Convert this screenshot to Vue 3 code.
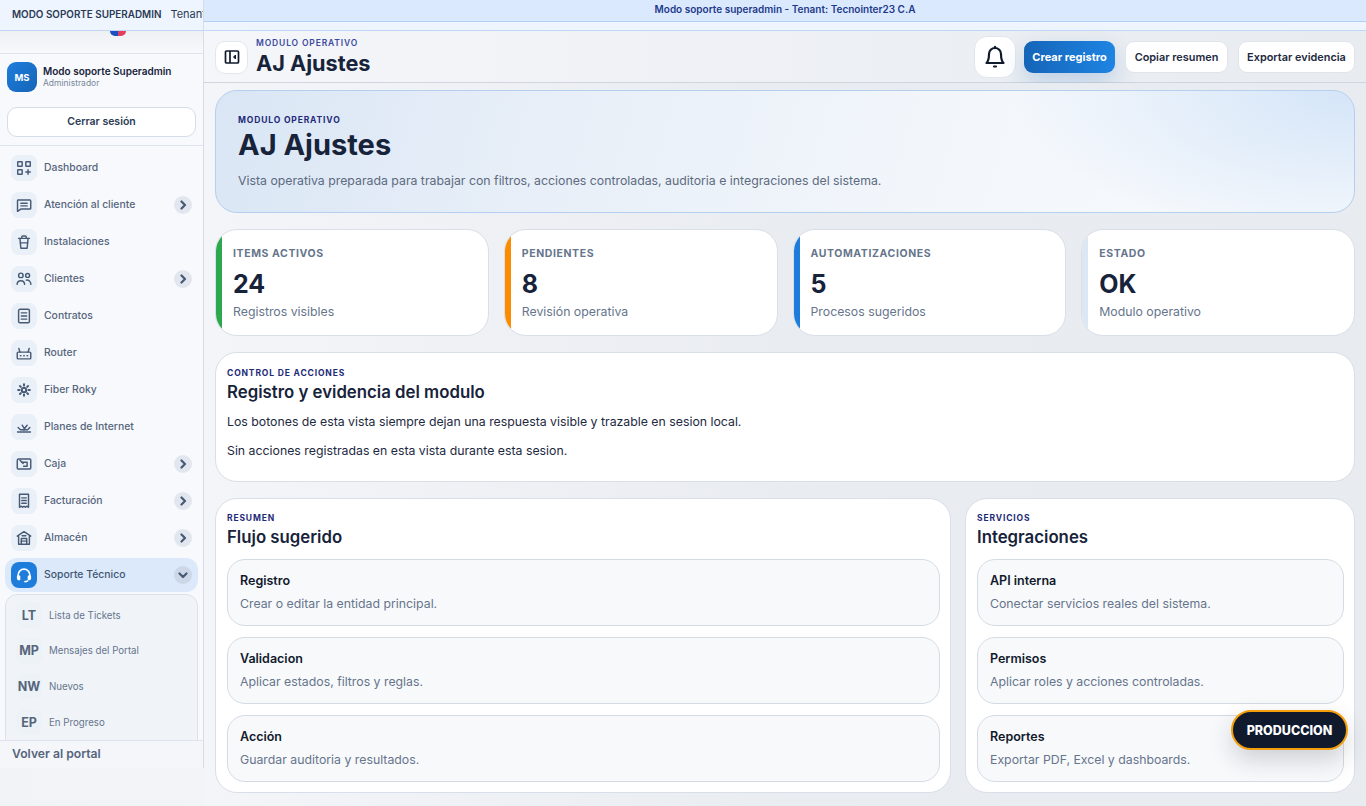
<script setup>
const navItems = [
  { label: 'Dashboard', icon: ['M3.500 3h4a.5.5 0 0 1 .5.5v4a.5.5 0 0 1-.5.5h-4a.5.5 0 0 1-.5-.5v-4a.5.5 0 0 1 .5-.5z', 'M12.500 3h4a.5.5 0 0 1 .5.5v4a.5.5 0 0 1-.5.5h-4a.5.5 0 0 1-.5-.5v-4a.5.5 0 0 1 .5-.5z', 'M3.500 12h4a.5.5 0 0 1 .5.5v4a.5.5 0 0 1-.5.5h-4a.5.5 0 0 1-.5-.5v-4a.5.5 0 0 1 .5-.5z', 'M14.500 12v5M12 14.500h5'] },
  { label: 'Atención al cliente', arrow: true, icon: ['M3.500 4.500h13a1 1 0 0 1 1 1v8a1 1 0 0 1-1 1H6.500L2.800 17V5.200a.7.7 0 0 1 .7-.7z', 'M6.500 8h7M6.500 11h7'] },
  { label: 'Instalaciones', icon: ['M4 6h12', 'M7.500 6V4.300a1 1 0 0 1 1-1h3a1 1 0 0 1 1 1V6', 'M5.500 6l1 11h7l1-11', 'M6 11h8'] },
  { label: 'Clientes', arrow: true, icon: ['M6.500 8.500a2.500 2.500 0 1 0 0-5 2.500 2.500 0 0 0 0 5z', 'M14 8.200a2.200 2.200 0 1 0 0-4.400 2.200 2.200 0 0 0 0 4.400z', 'M2.300 16c.4-5.500 8-5.500 8.400 0', 'M12.500 11.300c2.800-.6 5 1.400 5.200 4.700'] },
  { label: 'Contratos', icon: ['M5.500 2.500h9a1.500 1.500 0 0 1 1.500 1.500v12a1.500 1.500 0 0 1-1.500 1.500h-9A1.500 1.500 0 0 1 4 16V4a1.500 1.500 0 0 1 1.500-1.500z', 'M7 6.500h6M7 10h6M7 13.500h6'] },
  { label: 'Router', icon: ['M3.500 9h13a1 1 0 0 1 1 1v5.500a1 1 0 0 1-1 1h-13a1 1 0 0 1-1-1V10a1 1 0 0 1 1-1z', 'M5.500 9 4.300 5M14.500 9l1.200-4', 'M6 13h.6M9.700 13h.6M13.400 13h.6'] },
  { label: 'Fiber Roky', bold: true, icon: ['M10 7.500a2.500 2.500 0 1 0 0 5 2.500 2.500 0 0 0 0-5z', 'M10 3.500v1.500M10 15v1.500M3.500 10H5M15 10h1.500M5.500 5.500l1 1M13.500 13.500l1 1M14.500 5.500l-1 1M6.500 13.500l-1 1'] },
  { label: 'Planes de Internet', icon: ['M2.800 15.500h14.400', 'M3.500 10.500 6 13h8l2.500-2.500', 'M8 8l3 5M13.500 8 9.500 13'] },
  { label: 'Caja', arrow: true, icon: ['M4 4.500h12.500a1 1 0 0 1 1 1v9a1 1 0 0 1-1 1H3.500a1 1 0 0 1-1-1V6a1.500 1.500 0 0 1 1.500-1.500z', 'M7.500 8h6v4.500h-4', 'M5.500 5.800 9 9.300'] },
  { label: 'Facturación', arrow: true, icon: ['M5 2.500h10V17l-2-1.200-1.500 1.200-1.500-1.200L8.500 17 7 15.800 5 17z', 'M7.500 6.500h5M7.500 9.500h5M7.500 12.500h5'] },
  { label: 'Almacén', arrow: true, icon: ['M2.500 8 10 3l7.500 5', 'M4 8v9h12V8', 'M7 17v-6.500h6V17', 'M7 13.500h6M8 7.500h4'] },
]

const subItems = [
  { code: 'LT', label: 'Lista de Tickets' },
  { code: 'MP', label: 'Mensajes del Portal' },
  { code: 'NW', label: 'Nuevos' },
  { code: 'EP', label: 'En Progreso' },
]

const stats = [
  { title: 'ITEMS ACTIVOS', value: '24', note: 'Registros visibles', color: '#2ea84f' },
  { title: 'PENDIENTES', value: '8', note: 'Revisión operativa', color: '#fb8c00' },
  { title: 'AUTOMATIZACIONES', value: '5', note: 'Procesos sugeridos', color: '#1e7ddb' },
  { title: 'ESTADO', value: 'OK', note: 'Modulo operativo', color: '#dbe7f3' },
]

const flujo = [
  { title: 'Registro', text: 'Crear o editar la entidad principal.' },
  { title: 'Validacion', text: 'Aplicar estados, filtros y reglas.' },
  { title: 'Acción', text: 'Guardar auditoria y resultados.' },
]

const integraciones = [
  { title: 'API interna', text: 'Conectar servicios reales del sistema.' },
  { title: 'Permisos', text: 'Aplicar roles y acciones controladas.' },
  { title: 'Reportes', text: 'Exportar PDF, Excel y dashboards.' },
]
</script>

<template>
  <div class="app">
    <aside class="side">
      <div class="side-strip">
        <strong>MODO SOPORTE SUPERADMIN</strong>
        <span>Tenant: Tecnointer23 C.A</span>
      </div>
      <div class="side-logo">
        <span class="logo-mark"></span>
      </div>
      <div class="profile">
        <div class="avatar">MS</div>
        <div class="profile-text">
          <div class="profile-name">Modo soporte Superadmin</div>
          <div class="profile-role">Administrador</div>
        </div>
      </div>
      <div class="logout-wrap">
        <button type="button" class="logout">Cerrar sesión</button>
      </div>
      <nav class="nav">
        <a v-for="item in navItems" :key="item.label" class="nav-row">
          <span class="nav-icon">
            <svg width="20" height="20" viewBox="0 0 20 20" fill="none" stroke="#475a75" :stroke-width="item.bold ? 2.2 : 1.6" stroke-linecap="round" stroke-linejoin="round" aria-hidden="true">
              <path v-for="d in item.icon" :key="d" :d="d" />
            </svg>
          </span>
          <span class="nav-label">{{ item.label }}</span>
          <span v-if="item.arrow" class="nav-arrow">
            <svg width="10" height="10" viewBox="0 0 10 10" fill="none" stroke="#475a75" stroke-width="2.200" stroke-linecap="round" stroke-linejoin="round" aria-hidden="true">
              <path d="M3.500 1.500 7 5 3.500 8.500" />
            </svg>
          </span>
        </a>
        <a class="nav-row nav-row--active">
          <span class="nav-icon nav-icon--active">
            <svg width="20" height="20" viewBox="0 0 20 20" fill="none" stroke="#fff" stroke-width="1.800" stroke-linecap="round" stroke-linejoin="round" aria-hidden="true">
              <path d="M3.500 12V10a6.500 6.500 0 0 1 13 0v2" />
              <path d="M3 11.500h2v3.500H3.800A1.500 1.500 0 0 1 3 13.500zM17 11.500h-2v3.500h1.200a1.500 1.500 0 0 0 .8-1.500z" fill="#fff" />
              <path d="M14 16.500c-1 .6-2 .8-3 .8" />
            </svg>
          </span>
          <span class="nav-label">Soporte Técnico</span>
          <span class="nav-arrow nav-arrow--open">
            <svg width="10" height="10" viewBox="0 0 10 10" fill="none" stroke="#475a75" stroke-width="2.200" stroke-linecap="round" stroke-linejoin="round" aria-hidden="true">
              <path d="M1.500 3.500 5 7 8.500 3.500" />
            </svg>
          </span>
        </a>
        <div class="sub">
          <a v-for="s in subItems" :key="s.code" class="sub-row">
            <span class="sub-code">{{ s.code }}</span>
            <span class="sub-label">{{ s.label }}</span>
          </a>
        </div>
      </nav>
      <div class="side-foot">Volver al portal</div>
    </aside>

    <div class="main">
      <div class="banner">Modo soporte superadmin - Tenant: Tecnointer23 C.A</div>
      <div class="banner-gap"></div>

      <header class="topbar">
        <button type="button" class="square-btn" aria-label="Menu">
          <svg width="16" height="16" viewBox="0 0 16 16" fill="none" stroke="#111a2c" stroke-width="1.700" aria-hidden="true">
            <rect x="1.500" y="2" width="13" height="12" rx="1" />
            <path d="M6 2v12" />
            <path d="M11.500 6 9.500 8l2 2z" fill="#111a2c" stroke-width="1" />
          </svg>
        </button>
        <div class="topbar-title">
          <div class="eyebrow eyebrow--top">MODULO OPERATIVO</div>
          <div class="topbar-name">AJ Ajustes</div>
        </div>
        <div class="topbar-actions">
          <button type="button" class="bell-btn" aria-label="Notificaciones">
            <svg width="22" height="24" viewBox="0 0 22 24" fill="none" stroke="#111a2c" stroke-width="2.200" stroke-linecap="round" stroke-linejoin="round" aria-hidden="true">
              <path d="M11 3a6 6 0 0 0-6 6c0 5-1 7.500-2.500 9h17C18 16.500 17 14 17 9a6 6 0 0 0-6-6z" />
              <path d="M11 1.800V3" />
              <path d="M10 21.500h2" />
            </svg>
          </button>
          <button type="button" class="btn btn--primary">Crear registro</button>
          <button type="button" class="btn btn--copy">Copiar resumen</button>
          <button type="button" class="btn btn--export">Exportar evidencia</button>
        </div>
      </header>

      <main class="content">
        <section class="hero">
          <div class="eyebrow">MODULO OPERATIVO</div>
          <h1>AJ Ajustes</h1>
          <p>Vista operativa preparada para trabajar con filtros, acciones controladas, auditoria e integraciones del sistema.</p>
        </section>

        <section class="stats">
          <div v-for="s in stats" :key="s.title" class="stat" :style="{ '--accent': s.color }">
            <div class="stat-title">{{ s.title }}</div>
            <div class="stat-value">{{ s.value }}</div>
            <div class="stat-note">{{ s.note }}</div>
          </div>
        </section>

        <section class="panel panel--control">
          <div class="eyebrow">CONTROL DE ACCIONES</div>
          <h2>Registro y evidencia del modulo</h2>
          <p class="panel-line">Los botones de esta vista siempre dejan una respuesta visible y trazable en sesion local.</p>
          <p class="panel-line">Sin acciones registradas en esta vista durante esta sesion.</p>
        </section>

        <section class="columns">
          <div class="panel panel--col">
            <div class="eyebrow">RESUMEN</div>
            <h2>Flujo sugerido</h2>
            <div class="cards">
              <div v-for="c in flujo" :key="c.title" class="mini">
                <div class="mini-title">{{ c.title }}</div>
                <div class="mini-text">{{ c.text }}</div>
              </div>
            </div>
          </div>
          <div class="panel panel--col">
            <div class="eyebrow">SERVICIOS</div>
            <h2>Integraciones</h2>
            <div class="cards">
              <div v-for="c in integraciones" :key="c.title" class="mini">
                <div class="mini-title">{{ c.title }}</div>
                <div class="mini-text">{{ c.text }}</div>
              </div>
            </div>
          </div>
        </section>
      </main>
    </div>

    <div class="env-badge">PRODUCCION</div>
  </div>
</template>

<style scoped>
.app {
  position: relative;
  display: flex;
  width: 1366px;
  height: 806px;
  overflow: hidden;
  background: linear-gradient(90deg, #f1f3f7, #f4f6fa);
  font-family: Inter, "Liberation Sans", sans-serif;
  color: #111a2c;
}

/* sidebar */
.side {
  width: 204px;
  height: 768px;
  flex-shrink: 0;
  display: flex;
  flex-direction: column;
  background: #f7f9fc;
  border-right: 1px solid #d5dde8;
  box-sizing: border-box;
}
.side-strip {
  height: 31px;
  flex-shrink: 0;
  box-sizing: border-box;
  display: flex;
  align-items: center;
  gap: 9px;
  padding-left: 12px;
  padding-bottom: 2px;
  background: #eef5ff;
  border-bottom: 1px solid #bfd7f7;
  white-space: nowrap;
  overflow: hidden;
  font-size: 11px;
  color: #2b3a55;
}
.side-strip strong {
  font-weight: 600;
  font-size: 9.900px;
}
.side-logo {
  height: 23px;
  flex-shrink: 0;
  box-sizing: border-box;
  border-bottom: 1px solid #dde4ee;
  background: linear-gradient(#eef0f4, #f7f9fc);
  display: flex;
  justify-content: center;
  overflow: hidden;
}
.logo-mark {
  display: block;
  width: 16px;
  height: 5px;
  margin-left: 32px;
  border-radius: 0 0 8px 8px;
  background: linear-gradient(90deg, #1d4fc4 50%, #e2405a 50%);
}
.profile {
  display: flex;
  align-items: center;
  gap: 6px;
  padding: 8px 7px 0;
  flex-shrink: 0;
}
.avatar {
  width: 30px;
  height: 30px;
  border-radius: 9px;
  background: linear-gradient(135deg, #1e7ddb, #1565b8);
  color: #fff;
  font-size: 9.500px;
  font-weight: 700;
  display: flex;
  align-items: center;
  justify-content: center;
}
.profile-name {
  font-size: 10px;
  font-weight: 600;
  color: #17233a;
  line-height: 13px;
  white-space: nowrap;
}
.profile-role {
  font-size: 8.500px;
  color: #7a879b;
  line-height: 11px;
}
.logout-wrap {
  padding: 15px 7px 8px;
  border-bottom: 1px solid #dde4ee;
  flex-shrink: 0;
}
.logout {
  display: block;
  width: 100%;
  height: 30px;
  background: #fff;
  border: 1px solid #d5dde8;
  border-radius: 10px;
  color: #2b3a55;
  font-family: inherit;
  font-size: 10.500px;
  font-weight: 600;
  padding-bottom: 2px;
}
.nav {
  flex: 1;
  min-height: 0;
  overflow: hidden;
  padding-top: 9px;
}
.nav-row {
  display: flex;
  align-items: center;
  height: 26px;
  margin-bottom: 11px;
  padding: 0 11px;
  font-size: 10.400px;
  font-weight: 500;
  color: #56657c;
}
.nav-icon {
  width: 26px;
  height: 26px;
  flex-shrink: 0;
  border-radius: 8px;
  background: #eaf0f8;
  display: flex;
  align-items: center;
  justify-content: center;
  margin-right: 7px;
}
.nav-icon svg {
  width: 18px;
  height: 18px;
}
.nav-label {
  flex: 1;
  white-space: nowrap;
  padding-bottom: 2px;
}
.nav-arrow {
  width: 18px;
  height: 18px;
  border-radius: 50%;
  background: #e2e7ef;
  display: flex;
  align-items: center;
  justify-content: center;
}
.nav-arrow--open {
  background: #ccd8e8;
}
.nav-row--active {
  height: 34px;
  margin: -4px 5px 2px;
  padding: 0 6px;
  border-radius: 12px;
  background: #dbe9fb;
  color: #3f5572;
}
.nav-icon--active {
  background: #1e7ddb;
}
.sub {
  margin: 0 5px;
  padding: 7px 0 0 6px;
  border: 1px solid #dbe2ec;
  border-radius: 12px 12px 0 0;
  background: #f0f4f9;
  height: 170px;
  box-sizing: border-box;
}
.sub-row {
  display: flex;
  align-items: center;
  height: 26px;
  margin-bottom: 9.700px;
  font-size: 9.700px;
  color: #66758c;
}
.sub-code {
  width: 26px;
  height: 26px;
  margin-left: 4px;
  margin-right: 7px;
  border-radius: 8px;
  background: #edf2f7;
  display: flex;
  align-items: center;
  justify-content: center;
  font-size: 12.500px;
  font-weight: 700;
  color: #56657c;
}
.side-foot {
  height: 28px;
  flex-shrink: 0;
  box-sizing: border-box;
  padding: 5px 12px 0;
  border-top: 1px solid #dde4ee;
  background: #f4f6fa;
  font-size: 12.200px;
  font-weight: 600;
  color: #56657c;
}

/* main */
.main {
  flex: 1;
  min-width: 0;
  display: flex;
  flex-direction: column;
}
.banner {
  height: 22px;
  flex-shrink: 0;
  box-sizing: border-box;
  background: #dbe9fe;
  border-bottom: 1px solid #b3cff5;
  font-size: 10px;
  font-weight: 600;
  color: #1e3a8a;
  text-align: center;
  line-height: 18px;
}
.banner-gap {
  height: 9px;
  flex-shrink: 0;
  box-sizing: border-box;
  background: #eef5ff;
  border-bottom: 1px solid #bfd7f7;
}
.topbar {
  height: 52px;
  flex-shrink: 0;
  box-sizing: border-box;
  display: flex;
  align-items: center;
  padding: 1px 11px 0;
  border-bottom: 1px solid #cfd6e0;
  background: linear-gradient(90deg, #f4f6fa, #eceff3 60%, #e8ebf0);
}
.square-btn {
  width: 33px;
  height: 33px;
  padding: 0;
  background: #fff;
  border: 1px solid #e2e7ef;
  border-radius: 10px;
  display: flex;
  align-items: center;
  justify-content: center;
}
.topbar-title {
  margin-left: 8px;
}
.eyebrow {
  font-size: 8.500px;
  font-weight: 700;
  letter-spacing: 0.85px;
  color: #1e2a78;
  line-height: 11px;
}
.eyebrow--top {
  color: #3b4aa0;
  font-weight: 600;
}
.topbar-name {
  margin-top: 1px;
  font-size: 21.700px;
  font-weight: 700;
  line-height: 26px;
  color: #17233a;
}
.topbar-actions {
  margin-left: auto;
  display: flex;
  align-items: center;
  gap: 10px;
}
.bell-btn {
  width: 42px;
  height: 42px;
  padding: 0;
  margin-right: -2px;
  background: #fff;
  border: 1px solid #e2e7ef;
  border-radius: 13px;
  display: flex;
  align-items: center;
  justify-content: center;
}
.btn {
  height: 32px;
  padding: 0;
  background: #fff;
  border: 1px solid #e0e5ec;
  border-radius: 9px;
  font-family: inherit;
  font-size: 10.900px;
  font-weight: 600;
  color: #1d2940;
  white-space: nowrap;
}
.btn--copy {
  width: 103px;
}
.btn--export {
  width: 117px;
}
.btn--primary {
  width: 91px;
  border: none;
  background: linear-gradient(90deg, #1565b8, #1e84e2);
  color: #fff;
  font-size: 11px;
  font-weight: 700;
  box-shadow: 0 10px 24px rgba(21, 101, 184, 0.22);
}

.content {
  flex: 1;
  min-height: 0;
  padding: 7px 11px 0;
  display: flex;
  flex-direction: column;
  gap: 16px;
  background: linear-gradient(90deg, #f3f5f9, #e9ecf0 50%, #e8ebf0);
}
.hero {
  height: 123px;
  flex-shrink: 0;
  box-sizing: border-box;
  padding: 24px 22px 0;
  border: 1px solid #b5cfee;
  border-radius: 22px;
  background:
    radial-gradient(ellipse 340px 150px at 100% 0, #d4e5f8, rgba(212, 229, 248, 0)),
    linear-gradient(105deg, #dae6f5, #e8eff8 30%, #f2f6fb 62%, #f5f8fc 80%);
}
.hero h1 {
  margin: 1px 0 0;
  font-size: 29px;
  font-weight: 700;
  line-height: 36px;
  color: #17233a;
}
.hero p {
  margin: 10px 0 0;
  font-size: 12.300px;
  line-height: 16px;
  color: #5d6b80;
}
.stats {
  display: grid;
  grid-template-columns: repeat(4, 1fr);
  gap: 15px;
  flex-shrink: 0;
}
.stat {
  position: relative;
  height: 107px;
  box-sizing: border-box;
  padding: 17px 17px 0;
  background: #fff;
  border: 1px solid #d9dfe8;
  border-radius: 22px;
  overflow: hidden;
}
.stat::before {
  content: "";
  position: absolute;
  left: 0;
  top: 0;
  bottom: 0;
  width: 6px;
  background: var(--accent);
}
.stat-title {
  font-size: 10.500px;
  font-weight: 700;
  letter-spacing: 0.6px;
  line-height: 13px;
  color: #66758c;
}
.stat-value {
  margin-top: 9px;
  font-size: 25px;
  font-weight: 700;
  line-height: 30px;
  color: #17233a;
}
.stat-note {
  margin-top: 5px;
  font-size: 12.300px;
  line-height: 16px;
  color: #66758c;
}
.panel {
  box-sizing: border-box;
  padding: 15px 10px 0 11px;
  background: #fff;
  border: 1px solid #d9dfe8;
  border-radius: 22px;
}
.panel--col {
  padding-top: 14px;
}
.panel h2 {
  margin: 2px 0 0;
  font-size: 16.800px;
  font-weight: 600;
  line-height: 22px;
  color: #17233a;
}
.panel--control {
  height: 130px;
  flex-shrink: 0;
}
.panel-line {
  margin: 11px 0 0;
  font-size: 12.300px;
  line-height: 16px;
  color: #1d2940;
}
.panel-line + .panel-line {
  margin-top: 13px;
}
.columns {
  display: grid;
  grid-template-columns: 735.500px 1fr;
  gap: 14.500px;
  height: 295px;
  flex-shrink: 0;
}
.cards {
  margin-top: 11px;
  display: flex;
  flex-direction: column;
  gap: 11px;
}
.mini {
  height: 67px;
  box-sizing: border-box;
  padding: 13px 12px 0;
  background: #f8f9fb;
  border: 1px solid #d5dbe5;
  border-radius: 18px;
}
.mini-title {
  font-size: 12.500px;
  font-weight: 600;
  line-height: 16px;
  color: #111a2c;
}
.mini-text {
  margin-top: 7px;
  font-size: 12.300px;
  line-height: 16px;
  color: #66758c;
}
.env-badge {
  position: absolute;
  left: 1231px;
  top: 710px;
  width: 117px;
  height: 40px;
  box-sizing: border-box;
  display: flex;
  align-items: center;
  justify-content: center;
  background: #111a2c;
  border: 2px solid #f59e0b;
  border-radius: 20px;
  color: #fff;
  font-size: 12.500px;
  font-weight: 800;
  box-shadow: 0 10px 24px rgba(17, 26, 44, 0.18);
}
</style>
